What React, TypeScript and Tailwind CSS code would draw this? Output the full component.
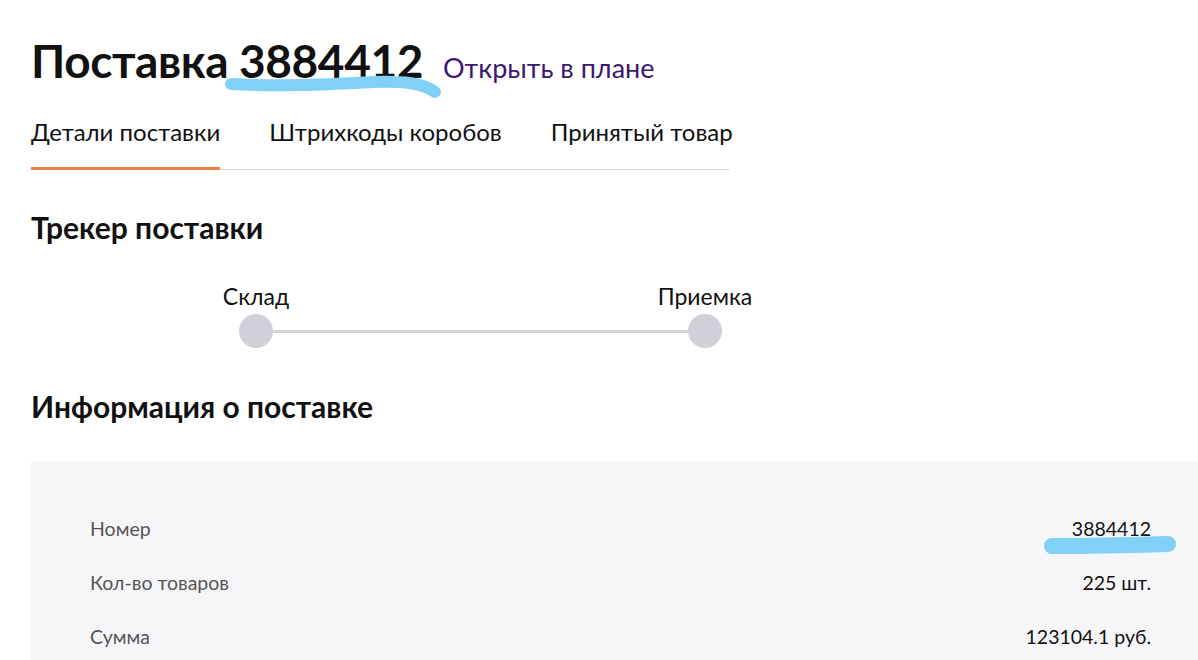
import React from "react";

const tabs = ["Детали поставки", "Штрихкоды коробов", "Принятый товар"];

const info = [
  { label: "Номер", value: "3884412", marked: true },
  { label: "Кол-во товаров", value: "225 шт." },
  { label: "Сумма", value: "123104.1 руб." },
];

function Marker({ className, d, width, height, stroke = 12 }: { className: string; d: string; width: number; height: number; stroke?: number }) {
  return (
    <svg className={className} width={width} height={height} viewBox={`0 0 ${width} ${height}`} fill="none">
      <path d={d} stroke="#80d0f8" strokeWidth={stroke} strokeLinecap="round" strokeLinejoin="round" />
    </svg>
  );
}

export default function App() {
  return (
    <div className="relative h-[660px] w-[1198px] overflow-hidden bg-white pl-[31px] pt-[33px] text-[#111] font-['Lato','Noto_Sans',sans-serif]">
      <div className="flex items-baseline gap-[20px] whitespace-nowrap">
        <h1 className="relative text-[46px] font-bold leading-[56px] tracking-[-0.4px]">
          Поставка 3884412
          <Marker
            className="pointer-events-none absolute left-[192px] top-[39px]"
            width={222}
            height={30}
            d="M8 12 C 60 15, 110 12, 150 10 C 180 9, 200 11, 212 20"
          />
        </h1>
        <a className="text-[27px] text-[#3a1772]">Открыть в плане</a>
      </div>

      <div className="mt-[27px] flex w-[699px] border-b border-[#d6d6d6] whitespace-nowrap">
        {tabs.map((t, i) => (
          <div
            key={t}
            className={
              i === 0
                ? "mb-[-1px] mr-[49px] border-b-[3px] border-[#ef7f45] pb-[19px] text-[24px] leading-[32px]"
                : "mr-[49px] pb-[21px] text-[24px] leading-[32px]"
            }
          >
            {t}
          </div>
        ))}
      </div>

      <h2 className="mt-[39px] text-[30px] font-bold leading-[36px]">Трекер поставки</h2>

      <div className="mt-[37px] ml-[190px] flex w-[534px] items-end">
        <div className="relative z-10 flex w-[70px] flex-col items-center">
          <span className="text-[23px] leading-[28px]">Склад</span>
          <span className="mt-[4px] h-[34px] w-[34px] rounded-full bg-[#d1d0d9]" />
        </div>
        <div className="mb-[15px] ml-[-18px] mr-[-33px] h-[3px] flex-1 bg-[#d3d3d8]" />
        <div className="relative z-10 flex w-[100px] flex-col items-center">
          <span className="text-[23px] leading-[28px]">Приемка</span>
          <span className="mt-[4px] h-[34px] w-[34px] rounded-full bg-[#d1d0d9]" />
        </div>
      </div>

      <h2 className="mt-[40px] text-[30px] font-bold leading-[36px]">Информация о поставке</h2>

      <div className="mt-[37px] bg-[#f6f6f9] pl-[59px] pr-[47px] pt-[54px] pb-[20px]">
        {info.map((r) => (
          <div key={r.label} className="flex h-[54px] items-start justify-between text-[19.5px] leading-[28px]">
            <span className="text-[#555]">{r.label}</span>
            <span className="relative text-[#111]">
              {r.value}
              {r.marked && (
                <Marker
                  className="pointer-events-none absolute left-[-29px] top-[19px]"
                  width={134}
                  height={22}
                  stroke={16}
                  d="M9 12 C 40 12, 90 11, 125 10"
                />
              )}
            </span>
          </div>
        ))}
      </div>
    </div>
  );
}
